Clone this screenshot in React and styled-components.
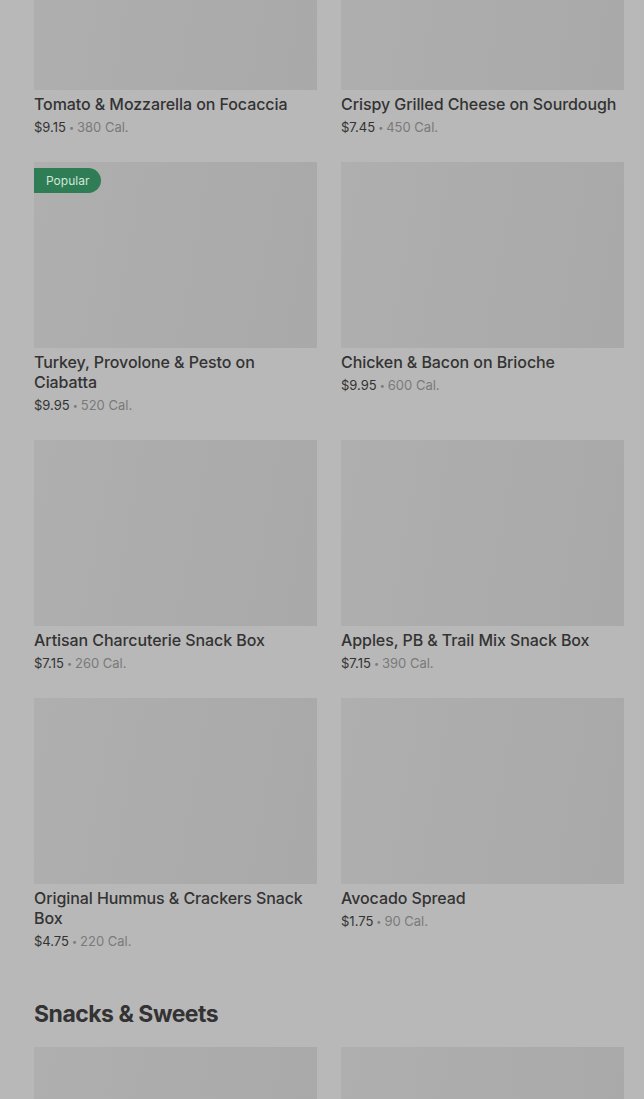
import styled, { createGlobalStyle } from 'styled-components';

const GlobalStyle = createGlobalStyle`
    html, body {
        margin: 0;
        padding: 0;
        background: #b8b8b8;
        overflow: hidden;
    }
    body {
        font-family: Inter, "Noto Sans", "Liberation Sans", sans-serif;
        color: #333;
    }
`

const Page = styled.main`
    padding: 0 20px 40px 34px;
    margin-top: -96px;
`
const Section = styled.section`
    display: flex;
    flex-direction: column;
`
const SectionTitle = styled.h2`
    margin: 48px 0 18px;
    font-size: 23px;
    line-height: 30px;
    font-weight: 700;
    letter-spacing: -0.5px;
    color: #333;
`
const Grid = styled.div`
    display: grid;
    grid-template-columns: repeat(2, 1fr);
    column-gap: 24px;
    row-gap: 25px;
`
const Card = styled.article`
    display: flex;
    flex-direction: column;
`
const Thumb = styled.div`
    position: relative;
    height: 186px;
    background: linear-gradient(100deg, #afafaf 0%, #acacac 45%, #a9a9a9 100%);
`
const Badge = styled.span`
    position: absolute;
    top: 6px;
    left: 0;
    height: 25px;
    padding: 0 12px;
    display: flex;
    align-items: center;
    border-radius: 0 13px 13px 0;
    background: #2f7d55;
    color: #d2e6d8;
    font-size: 12px;
    font-weight: 400;
`
const Name = styled.h3`
    margin: 4px 0 0;
    font-size: 16px;
    line-height: 20px;
    font-weight: 500;
    letter-spacing: -0.08px;
    color: #333;
`
const Meta = styled.p`
    margin: 3px 0 0;
    height: 20px;
    font-size: 13px;
    line-height: 20px;
    color: #333;
`
const Dot = styled.span`
    display: inline-block;
    font-size: 9px;
    line-height: 0;
    margin: 0 3px;
    color: #7a7a7a;
    transform: translateY(-1px);
`
const Cal = styled.span`
    color: #7a7a7a;
`

const items = [
    { name: 'Tomato & Mozzarella on Focaccia', price: '$9.15', cal: '380 Cal.' },
    { name: 'Crispy Grilled Cheese on Sourdough', price: '$7.45', cal: '450 Cal.' },
    { name: 'Turkey, Provolone & Pesto on Ciabatta', price: '$9.95', cal: '520 Cal.', popular: true },
    { name: 'Chicken & Bacon on Brioche', price: '$9.95', cal: '600 Cal.' },
    { name: 'Artisan Charcuterie Snack Box', price: '$7.15', cal: '260 Cal.' },
    { name: 'Apples, PB & Trail Mix Snack Box', price: '$7.15', cal: '390 Cal.' },
    { name: 'Original Hummus & Crackers Snack Box', price: '$4.75', cal: '220 Cal.' },
    { name: 'Avocado Spread', price: '$1.75', cal: '90 Cal.' },
]

const snacks = [{ id: 's1' }, { id: 's2' }]

const Item = ({ item }) => (
    <Card>
        <Thumb>
            {item.popular && <Badge>Popular</Badge>}
        </Thumb>
        {item.name && <Name>{item.name}</Name>}
        {item.price && (
            <Meta>{item.price}<Dot>•</Dot><Cal>{item.cal}</Cal></Meta>
        )}
    </Card>
)

const App = () => {
    return (
        <>
            <GlobalStyle />
            <Page>
                <Section>
                    <Grid>
                        {items.map(item => <Item key={item.name} item={item} />)}
                    </Grid>
                </Section>
                <Section>
                    <SectionTitle>Snacks &amp; Sweets</SectionTitle>
                    <Grid>
                        {snacks.map(item => <Item key={item.id} item={item} />)}
                    </Grid>
                </Section>
            </Page>
        </>
    )
}
export default App;
